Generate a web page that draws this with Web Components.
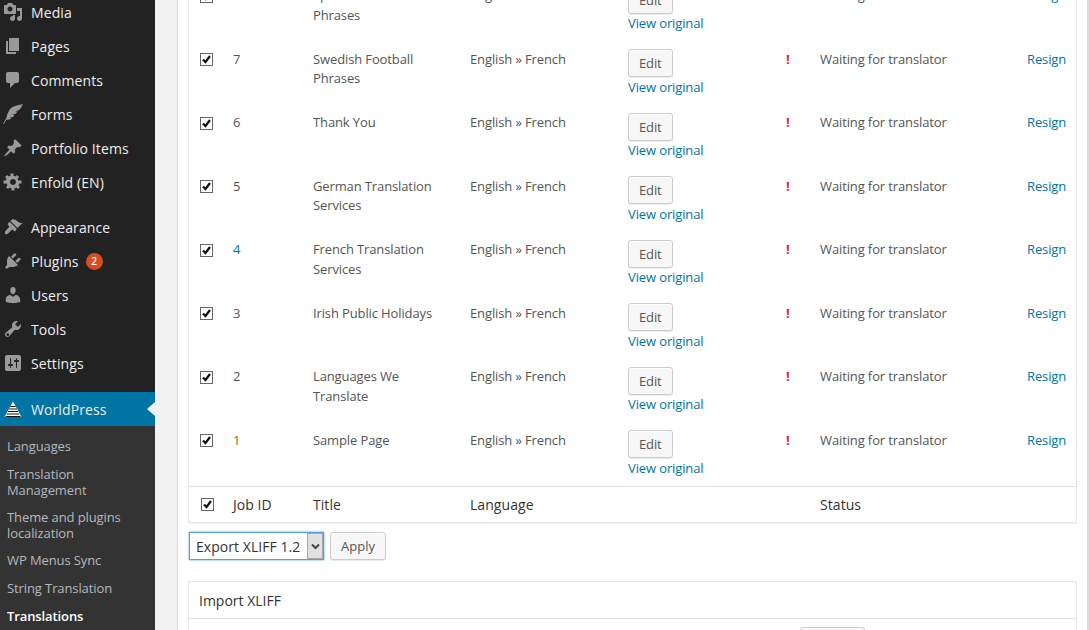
<!DOCTYPE html>
<html><head><meta charset="utf-8"><style>
html,body{margin:0;padding:0;height:630px;overflow:hidden;background:#f1f1f1;font-family:"Open Sans",sans-serif;}
body{display:flex;}
</style></head><body>
<wp-sidebar></wp-sidebar>
<wp-main></wp-main>
<script>
const icons={
media:'<path d="M13 11V4c0-.55-.45-1-1-1h-1.670L9 1H5L3.670 3H2c-.55 0-1 .45-1 1v7c0 .55.45 1 1 1h10c.55 0 1-.45 1-1zM7 4.500c1.380 0 2.500 1.120 2.500 2.500S8.380 9.500 7 9.500 4.500 8.380 4.500 7 5.620 4.500 7 4.500zM14 6h5v10.500c0 1.380-1.120 2.500-2.500 2.500S14 17.880 14 16.500s1.120-2.500 2.500-2.500c.17 0 .34.020.5.050V9h-3V6zm-4 8.050V13h2v3.500c0 1.380-1.120 2.500-2.500 2.500S7 17.880 7 16.500 8.120 14 9.500 14c.17 0 .34.020.5.050z"/>',
pages:'<path d="M6 15V2h10v13H6zm-1 1h8v2H3V5h2v11z"/>',
comments:'<path d="M5 2h9c1.100 0 2 .9 2 2v7c0 1.100-.9 2-2 2h-2l-5 5v-5H5c-1.100 0-2-.9-2-2V4c0-1.100.9-2 2-2z"/>',
forms:'<path d="M20 0C16 1 10 2 7 5L6.500 6C5 8 4 11 3.500 13.500L0 20H.8L3.500 15.500C5 16 7 15.500 8.500 14L6.500 13.500 10 13 11.500 11 9 11 13 9.500 14.500 7.500 12 7.500 16 6C18 4 19 2 20 0z"/>',
pin:'<path d="M10.440 3.020l1.820-1.820 6.360 6.350-1.830 1.820c-1.050-.68-2.480-.57-3.410.36l-.75.75c-.92.93-1.040 2.350-.35 3.410l-1.830 1.820-2.410-2.410-2.800 2.790c-.42.420-3.380 2.710-3.800 2.290s1.860-3.390 2.280-3.810l2.790-2.790L4.100 9.360l1.830-1.820c1.050.69 2.480.57 3.400-.36l.75-.75c.93-.92 1.050-2.350.36-3.410z"/>',
gear:'<path d="M18 12h-2.180c-.17.7-.44 1.350-.81 1.930l1.540 1.540-2.100 2.100-1.540-1.540c-.58.360-1.230.640-1.910.810V19H8v-2.180c-.68-.170-1.330-.45-1.910-.81l-1.540 1.540-2.120-2.120 1.540-1.540c-.36-.58-.64-1.230-.81-1.910H0V9.020h2.180c.17-.68.45-1.330.81-1.910L1.450 5.570l2.120-2.100 1.540 1.540c.58-.37 1.230-.64 1.910-.81V2h3v2.180c.68.170 1.330.44 1.910.81l1.540-1.540 2.100 2.120-1.540 1.540c.36.58.64 1.230.81 1.910H18V12zm-8.500 1.500c1.660 0 3-1.340 3-3s-1.340-3-3-3-3 1.340-3 3 1.340 3 3 3z" transform="translate(.5 -.5)"/>',
brush:'<path d="M14.480 11.060L7.410 3.990l1.500-1.500c.5-.560 2.300-.47 3.510.32 1.210.800 1.430 1.280 2.910 2.100 1.180.640 2.450 1.260 4.450.850zm-.71.710L6.700 4.700 4.930 6.470c-.39.390-.39 1.020 0 1.410l1.060 1.060c.39.390.39 1.030 0 1.420-.6.600-1.430 1.310-2.210 2.090-1.790 1.790-2.590 3.290-1.600 4.280.99.990 2.490.19 4.280-1.600.78-.78 1.490-1.610 2.090-2.210.39-.39 1.030-.39 1.420 0l1.060 1.060c.39.390 1.020.39 1.410 0z"/>',
plug:'<path d="M13.110 4.360L9.870 7.600 8 5.730l3.240-3.240c.35-.34 1.050-.2 1.560.32.52.510.660 1.210.31 1.550zm-8 1.770l.91-1.120 9.010 9.010-1.190.84c-.71.710-2.630 1.160-3.820 1.160H6.140L4.900 17.260c-.59.590-1.540.59-2.120 0-.59-.58-.59-1.530 0-2.120l1.240-1.240v-3.880c0-1.130.4-3.180 1.090-3.890zm7.260 3.970l3.240-3.240c.34-.35 1.040-.21 1.550.31.52.510.66 1.210.31 1.550l-3.240 3.250z"/>',
user:'<path d="M10 9.250c-2.270 0-2.730-3.440-2.730-3.440C7 4.020 7.820 2 9.970 2c2.160 0 2.980 2.020 2.710 3.810 0 0-.41 3.440-2.680 3.440zm0 2.570L12.720 10c2.390 0 4.520 2.330 4.520 4.530v2.490s-3.650 1.130-7.240 1.130c-3.650 0-7.240-1.130-7.240-1.130v-2.490c0-2.250 1.940-4.480 4.470-4.480z"/>',
wrench:'<path d="M16.680 9.770c-1.340 1.340-3.300 1.670-4.950.99l-5.410 6.520c-.99.990-2.590.990-3.580 0s-.99-2.590 0-3.570l6.520-5.420c-.68-1.650-.35-3.610.99-4.950 1.280-1.280 3.120-1.620 4.720-1.060l-2.890 2.890 2.820 2.820 2.860-2.870c.53 1.580.18 3.390-1.080 4.670zM3.810 16.740c.55.550 1.440.55 1.990 0 .55-.55.55-1.440 0-1.990s-1.440-.55-1.990 0-.55 1.440 0 1.990z"/>',
settings:'<path d="M18 16V4c0-1.100-.9-2-2-2H4c-1.100 0-2 .9-2 2v12c0 1.100.9 2 2 2h12c1.100 0 2-.9 2-2zM8 11h1c.55 0 1 .45 1 1s-.45 1-1 1H8v1.500c0 .28-.22.5-.5.5s-.5-.22-.5-.5V13H6c-.55 0-1-.45-1-1s.45-1 1-1h1V5.500c0-.28.22-.5.5-.5s.5.22.5.5V11zm5-2h-1c-.55 0-1-.45-1-1s.45-1 1-1h1V5.500c0-.28.22-.5.5-.5s.5.22.5.5V7h1c.55 0 1 .45 1 1s-.45 1-1 1h-1v5.500c0 .28-.22.5-.5.5s-.5-.22-.5-.5V9z"/>'
};
const mk=(cls,html,css)=>customElements.define(cls,class extends HTMLElement{
 constructor(){super();const r=this.attachShadow({mode:'open'});r.innerHTML='<style>'+css+'</style>'+html;}
});
class MenuItem extends HTMLElement{
 constructor(){super();this.attachShadow({mode:'open'});}
 connectedCallback(){
  const ic=icons[this.getAttribute('icon')]||'';
  this.shadowRoot.innerHTML=`<style>
  :host{display:flex;align-items:center;height:34px;color:#eee;font-size:14px;letter-spacing:.1px}
  svg{width:20px;height:20px;margin-left:3px;flex:none;fill:#999;}
  .t{margin-left:8px;white-space:nowrap;display:flex;align-items:center}
  </style><svg viewBox="0 0 20 20">${ic}</svg><span class="t"><slot></slot></span>`;
 }
}
customElements.define('wp-menu-item',MenuItem);
mk('wp-badge','<slot></slot>',`:host{display:inline-block;width:17px;height:17px;line-height:17px;border-radius:50%;background:#d54e21;color:#fff;font-size:10px;font-weight:600;text-align:center;margin-left:7px}`);
mk('wp-sidebar',`
 <div class="top">
  <wp-menu-item icon="media">Media</wp-menu-item>
  <wp-menu-item icon="pages">Pages</wp-menu-item>
  <wp-menu-item icon="comments">Comments</wp-menu-item>
  <wp-menu-item icon="forms">Forms</wp-menu-item>
  <wp-menu-item icon="pin">Portfolio Items</wp-menu-item>
  <wp-menu-item icon="gear">Enfold (EN)</wp-menu-item>
 </div>
 <div class="sep"></div>
 <wp-menu-item icon="brush">Appearance</wp-menu-item>
 <wp-menu-item icon="plug">Plugins<wp-badge>2</wp-badge></wp-menu-item>
 <wp-menu-item icon="user">Users</wp-menu-item>
 <wp-menu-item icon="wrench">Tools</wp-menu-item>
 <wp-menu-item icon="settings">Settings</wp-menu-item>
 <div class="sep2"></div>
 <div class="cur"><svg viewBox="0 0 20 20" width="20" height="20"><path d="M10 2.500L18.500 18H1.500z" fill="#fff"/><path d="M7.400 7.500h5.200M6.200 10h7.600M5 12.500h10M3.800 15h12.400M2.500 17.500h15" stroke="#111" stroke-width="1"/></svg><span>WorldPress</span><i></i></div>
 <div class="sub">
  <a>Languages</a><a class="two">Translation Management</a><a class="two">Theme and plugins localization</a><a>WP Menus Sync</a><a>String Translation</a><a class="b">Translations</a>
 </div>`,
`:host{display:block;width:155px;flex:none;height:630px;background:#222;overflow:hidden}
 .top{margin-top:-5px}
 .sep{height:11px}.sep2{height:12px}
 .cur{height:34px;background:#0074a2;color:#eee;font-size:14px;display:flex;align-items:center;position:relative;letter-spacing:.1px}
 .cur svg{margin-left:3px}.cur span{margin-left:8px}
 .cur i{position:absolute;right:0;top:10px;border:7px solid transparent;border-left-width:0;border-right:8px solid #f1f1f1}
 .sub{background:#333;padding:6px 0;font-size:13px;line-height:16px;color:#b4b9be;letter-spacing:-.1px}
 .sub a{display:block;padding:6px 12px 6px 7px;}
 .sub .two{margin-bottom:-1px}
 .sub .b{color:#fff;font-weight:600}
`);
const COLS='44px 80px 157px 158px 158px 34px 207px 1fr';
class JobRow extends HTMLElement{
 constructor(){super();this.attachShadow({mode:'open'});}
 connectedCallback(){
  const g=n=>this.getAttribute(n);
  const idc=g('idc')||'#555';
  this.shadowRoot.innerHTML=`<style>
  :host{display:grid;grid-template-columns:${COLS};font-size:13px;line-height:19.500px;color:#555;height:63.500px;box-sizing:border-box;letter-spacing:-.12px}
  .d{padding-top:8px}
  .c{padding:11.500px 0 0 11px}
  a{color:#0074a2}
  .e{padding-top:7.500px}
  .e a{display:block;margin-top:.5px}
  .x{color:#e21d3f;font-weight:700;padding-top:8px}
  .i{color:${idc}}
  .t{padding-right:20px}
  </style>
  <div class="c"><wp-check></wp-check></div>
  <div class="d i">${g('job')}</div>
  <div class="d t">${g('title')}</div>
  <div class="d">English » French</div>
  <div class="e"><wp-button>Edit</wp-button><a>View original</a></div>
  <div class="x">!</div>
  <div class="d">Waiting for translator</div>
  <div class="d"><a>Resign</a></div>`;
 }
}
customElements.define('wp-job-row',JobRow);
mk('wp-check',`<svg viewBox="0 0 11 11" width="11" height="11"><path d="M2 5.500l2.500 2.500 4.500-6" fill="none" stroke="#111" stroke-width="2.200"/></svg>`,
`:host{display:block;width:11px;height:11px;border:1px solid #666;background:#fff;box-sizing:content-box}svg{display:block}`);
mk('wp-button','<slot></slot>',`:host{display:block;width:max-content;box-sizing:border-box;height:28px;line-height:26px;padding:0 10px;font-size:13px;color:#555;background:#f7f7f7;border:1px solid #ccc;border-radius:3px;box-shadow:inset 0 1px 0 #fff,0 1px 0 rgba(0,0,0,.08)}`);
mk('wp-main',`
 <div class="wrap">
  <div class="tbl">
   <div class="rows">
    <wp-job-row job="8" title="Spanish Football Phrases"></wp-job-row>
    <wp-job-row job="7" title="Swedish Football Phrases"></wp-job-row>
    <wp-job-row job="6" title="Thank You"></wp-job-row>
    <wp-job-row job="5" title="German Translation Services"></wp-job-row>
    <wp-job-row job="4" idc="#0074a2" title="French Translation Services"></wp-job-row>
    <wp-job-row job="3" title="Irish Public Holidays"></wp-job-row>
    <wp-job-row job="2" title="Languages We Translate"></wp-job-row>
    <wp-job-row job="1" idc="#a46b22" title="Sample Page"></wp-job-row>
   </div>
   <div class="foot"><div class="c"><wp-check></wp-check></div><div>Job ID</div><div>Title</div><div>Language</div><div></div><div></div><div>Status</div></div>
  </div>
  <div class="acts"><div class="sel"><span>Export XLIFF 1.2</span><b><svg width="9" height="7" viewBox="0 0 9 7"><path d="M1 1.500l3.500 3.500 3.500-3.500" fill="none" stroke="#444" stroke-width="2"/></svg></b></div><wp-button>Apply</wp-button></div>
  <div class="box"><div class="h">Import XLIFF</div><div class="bd"><wp-button class="bb"></wp-button></div></div>
 </div>`,
`:host{display:block;flex:1;min-width:0;background:#f1f1f1;height:630px;overflow:hidden;padding-left:22px;box-sizing:border-box}
 .wrap{box-sizing:border-box;height:630px;background:#fff;border-left:1px solid #ddd;border-right:2px solid #ddd;padding:0 10px 0 10px;overflow:hidden}
 .tbl{border:1px solid #e5e5e5;border-top:0;margin-top:-22px;box-shadow:0 1px 1px rgba(0,0,0,.04)}
 .foot{display:grid;grid-template-columns:${COLS};height:35px;align-items:center;border-top:1px solid #e1e1e1;font-size:14px;color:#333;letter-spacing:.06px}
 .c{padding-left:12px}
 .acts{display:flex;margin:9px 0 0 1px;gap:6px;align-items:flex-start}
 .sel{width:135px;height:28px;box-sizing:border-box;border:1px solid #5b9dd9;box-shadow:0 0 2px rgba(30,140,190,.8);display:flex;font-size:14px;color:#333;background:#fff;line-height:28px;letter-spacing:.05px}
 .sel span{flex:1;padding-left:6px;white-space:nowrap}
 .sel b{width:16px;background:#e0e0e0;border:1px solid #aaa;box-sizing:border-box;display:flex;align-items:center;justify-content:center}
 .box{margin-top:21px;border:1px solid #e5e5e5;border-bottom:0;font-size:14px;color:#333}
 .h{height:36px;line-height:37px;padding-left:10px;border-bottom:1px solid #e1e1e1}
 .bd{display:flex;justify-content:flex-end;padding:8px 211px 0 0}
 .bb{width:65px}
`);
</script>
</body></html>
